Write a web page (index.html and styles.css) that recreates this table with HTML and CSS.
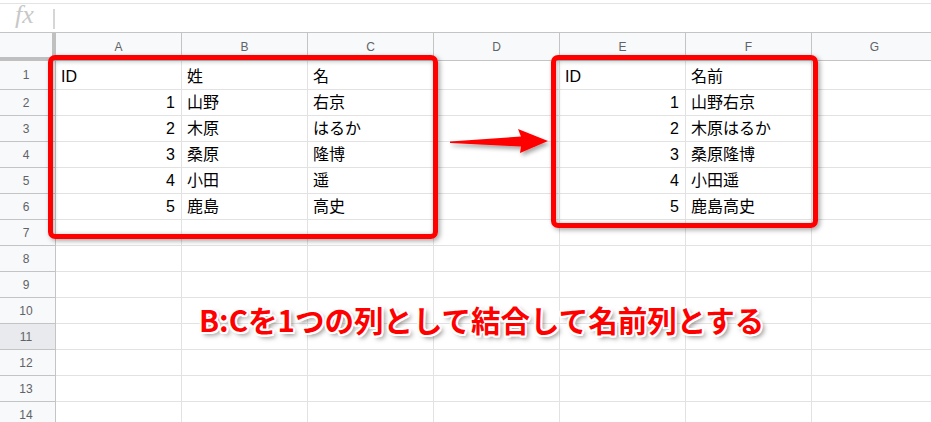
FILE: index.html
```
<!DOCTYPE html>
<html lang="ja">
<head>
<meta charset="utf-8">
<link rel="stylesheet" href="styles.css">
</head>
<body>
<div class="sheet">
  <div class="fbar"><span class="fx">fx</span><span class="sep"></span></div>
  <div class="grid">
    <div class="corner"></div>
    <div class="ch">A</div><div class="ch">B</div><div class="ch">C</div><div class="ch">D</div><div class="ch">E</div><div class="ch">F</div><div class="ch">G</div>

    <div class="rh r1">1</div><div class="c r1">ID</div><div class="c r1">姓</div><div class="c r1">名</div><div class="c r1"></div><div class="c r1">ID</div><div class="c r1">名前</div><div class="c r1"></div>
    <div class="rh">2</div><div class="c n">1</div><div class="c">山野</div><div class="c">右京</div><div class="c"></div><div class="c n">1</div><div class="c">山野右京</div><div class="c"></div>
    <div class="rh">3</div><div class="c n">2</div><div class="c">木原</div><div class="c">はるか</div><div class="c"></div><div class="c n">2</div><div class="c">木原はるか</div><div class="c"></div>
    <div class="rh">4</div><div class="c n">3</div><div class="c">桑原</div><div class="c">隆博</div><div class="c"></div><div class="c n">3</div><div class="c">桑原隆博</div><div class="c"></div>
    <div class="rh">5</div><div class="c n">4</div><div class="c">小田</div><div class="c">遥</div><div class="c"></div><div class="c n">4</div><div class="c">小田遥</div><div class="c"></div>
    <div class="rh">6</div><div class="c n">5</div><div class="c">鹿島</div><div class="c">高史</div><div class="c"></div><div class="c n">5</div><div class="c">鹿島高史</div><div class="c"></div>
    <div class="rh">7</div><div class="c"></div><div class="c"></div><div class="c"></div><div class="c"></div><div class="c"></div><div class="c"></div><div class="c"></div>
    <div class="rh">8</div><div class="c"></div><div class="c"></div><div class="c"></div><div class="c"></div><div class="c"></div><div class="c"></div><div class="c"></div>
    <div class="rh">9</div><div class="c"></div><div class="c"></div><div class="c"></div><div class="c"></div><div class="c"></div><div class="c"></div><div class="c"></div>
    <div class="rh">10</div><div class="c"></div><div class="c"></div><div class="c"></div><div class="c"></div><div class="c"></div><div class="c"></div><div class="c"></div>
    <div class="rh sel">11</div><div class="c"></div><div class="c"></div><div class="c"></div><div class="c"></div><div class="c"></div><div class="c"></div><div class="c"></div>
    <div class="rh">12</div><div class="c"></div><div class="c"></div><div class="c"></div><div class="c"></div><div class="c"></div><div class="c"></div><div class="c"></div>
    <div class="rh">13</div><div class="c"></div><div class="c"></div><div class="c"></div><div class="c"></div><div class="c"></div><div class="c"></div><div class="c"></div>
    <div class="rh">14</div><div class="c"></div><div class="c"></div><div class="c"></div><div class="c"></div><div class="c"></div><div class="c"></div><div class="c"></div>
  </div>

  <div class="box box-left"></div>
  <div class="box box-right"></div>
  <svg class="arrow" width="120" height="45" viewBox="0 0 120 45">
    <defs>
      <filter id="sh" x="-20%" y="-50%" width="140%" height="200%">
        <feDropShadow dx="2" dy="3" stdDeviation="2" flood-color="#000" flood-opacity="0.35"/>
      </filter>
    </defs>
    <polygon points="10,21.5 81,16.5 78,9 108,21 80,33 81,26.5 10,23" fill="#ff0000" filter="url(#sh)"/>
  </svg>
  <div class="caption">B:Cを1つの列として結合して名前列とする</div>
</div>
</body>
</html>
```
FILE: styles.css
```
* { box-sizing: border-box; }
html, body { margin: 0; padding: 0; background: #fff; }
body { width: 931px; height: 422px; overflow: hidden; }

.sheet {
  position: relative;
  width: 931px;
  height: 422px;
  overflow: hidden;
  font-family: "Liberation Sans", "Noto Sans CJK JP", sans-serif;
}

.fbar {
  margin-top: 3px;
  height: 30px;
  border-top: 1px solid #e3e3e3;
  border-bottom: 1px solid #c4c4c4;
  display: flex;
  align-items: center;
  padding-left: 15px;
}
.fx {
  font-family: "Liberation Serif", serif;
  font-style: italic;
  font-size: 26px;
  color: #c8c8c8;
  width: 38px;
  line-height: 1;
  margin-top: -6px;
}
.sep {
  width: 2px;
  height: 20px;
  background: #d6d6d6;
  margin-top: 1px;
}

.grid {
  display: grid;
  grid-template-columns: 56px repeat(7, 126px);
  grid-template-rows: 28px 29px;
  grid-auto-rows: 26px;
}

.corner {
  background: #f8f9fa;
  border-right: 4px solid #c0c0c0;
  border-bottom: 4px solid #c0c0c0;
}
.ch {
  background: #f8f9fa;
  border-right: 1px solid #c4c4c4;
  border-bottom: 1px solid #c4c4c4;
  color: #5f6368;
  font-size: 12px;
  text-align: center;
  line-height: 28px;
}
.rh {
  background: #f8f9fa;
  border-right: 1px solid #c4c4c4;
  border-bottom: 1px solid #c4c4c4;
  color: #5f6368;
  font-size: 12px;
  display: flex;
  align-items: center;
  justify-content: center;
  padding-right: 3px;
}
.rh.sel { background: #e8eaed; }

.c {
  border-right: 1px solid #e2e2e2;
  border-bottom: 1px solid #e2e2e2;
  font-size: 16px;
  line-height: 18px;
  color: #000;
  display: flex;
  align-items: flex-end;
  padding: 0 5px 3px 5px;
  white-space: nowrap;
}
.c.n { justify-content: flex-end; padding-right: 6px; }

.box {
  position: absolute;
  border: 5px solid #ff0000;
  border-radius: 7px;
  box-shadow: 2px 2px 5px rgba(0,0,0,0.35), inset 1px 1px 5px rgba(0,0,0,0.3);
}
.box-left { left: 48px; top: 55px; width: 390px; height: 184px; }
.box-right { left: 551px; top: 55px; width: 267px; height: 173px; }

.arrow {
  position: absolute;
  left: 440px;
  top: 120px;
}

.caption {
  position: absolute;
  left: 199px;
  top: 299px;
  font-family: "Noto Sans CJK JP", sans-serif;
  font-weight: 700;
  font-size: 29.5px;
  line-height: 40px;
  color: #ff0000;
  white-space: nowrap;
  text-shadow:
    -1.5px -1.5px 0 #fff, 1.5px -1.5px 0 #fff, -1.5px 1.5px 0 #fff, 1.5px 1.5px 0 #fff,
    0 -2px 0 #fff, 0 2px 0 #fff, -2px 0 0 #fff, 2px 0 0 #fff,
    3px 3px 5px rgba(0,0,0,0.5);
}
```
